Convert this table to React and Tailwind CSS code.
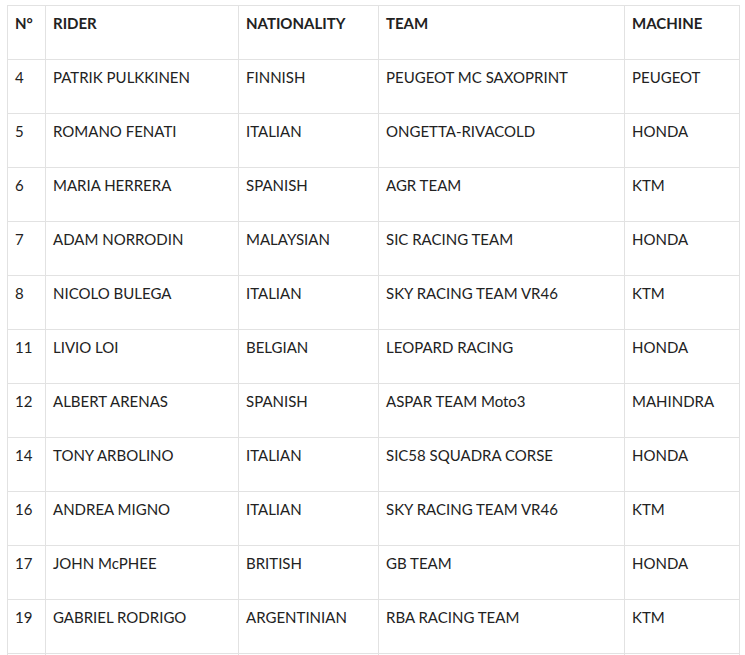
const riders = [
  ['4', 'PATRIK PULKKINEN', 'FINNISH', 'PEUGEOT MC SAXOPRINT', 'PEUGEOT'],
  ['5', 'ROMANO FENATI', 'ITALIAN', 'ONGETTA-RIVACOLD', 'HONDA'],
  ['6', 'MARIA HERRERA', 'SPANISH', 'AGR TEAM', 'KTM'],
  ['7', 'ADAM NORRODIN', 'MALAYSIAN', 'SIC RACING TEAM', 'HONDA'],
  ['8', 'NICOLO BULEGA', 'ITALIAN', 'SKY RACING TEAM VR46', 'KTM'],
  ['11', 'LIVIO LOI', 'BELGIAN', 'LEOPARD RACING', 'HONDA'],
  ['12', 'ALBERT ARENAS', 'SPANISH', 'ASPAR TEAM Moto3', 'MAHINDRA'],
  ['14', 'TONY ARBOLINO', 'ITALIAN', 'SIC58 SQUADRA CORSE', 'HONDA'],
  ['16', 'ANDREA MIGNO', 'ITALIAN', 'SKY RACING TEAM VR46', 'KTM'],
  ['17', 'JOHN McPHEE', 'BRITISH', 'GB TEAM', 'HONDA'],
  ['19', 'GABRIEL RODRIGO', 'ARGENTINIAN', 'RBA RACING TEAM', 'KTM'],
];

const headers = ['N°', 'RIDER', 'NATIONALITY', 'TEAM', 'MACHINE'];
const widths = ['w-[38px]', 'w-[193px]', 'w-[140px]', 'w-[246px]', 'w-[115px]'];

const App = () => {
  return (
    <div className="w-[745px] h-[655px] overflow-hidden bg-white pt-[5px] pl-[7px]" style={{ fontFamily: '"Lato", "Open Sans", sans-serif' }}>
      <table className="table-fixed border-collapse w-[732px] text-[15px] text-[#222]">
        <thead>
          <tr>
            {headers.map((h, i) => (
              <th key={h} className={`${widths[i]} h-[54px] border border-[#e2e2e2] pl-[7px] pr-2 pt-[6px] align-top text-left font-bold`}>
                {h}
              </th>
            ))}
          </tr>
        </thead>
        <tbody>
          {riders.map((r) => (
            <tr key={r[0]}>
              {r.map((c, i) => (
                <td key={i} className="h-[54px] border border-[#e2e2e2] pl-[7px] pr-2 pt-[6px] align-top">
                  {c}
                </td>
              ))}
            </tr>
          ))}
          <tr>
            {headers.map((h) => (
              <td key={h} className="h-[54px] border border-[#e2e2e2]"></td>
            ))}
          </tr>
        </tbody>
      </table>
    </div>
  );
};

export default App;
